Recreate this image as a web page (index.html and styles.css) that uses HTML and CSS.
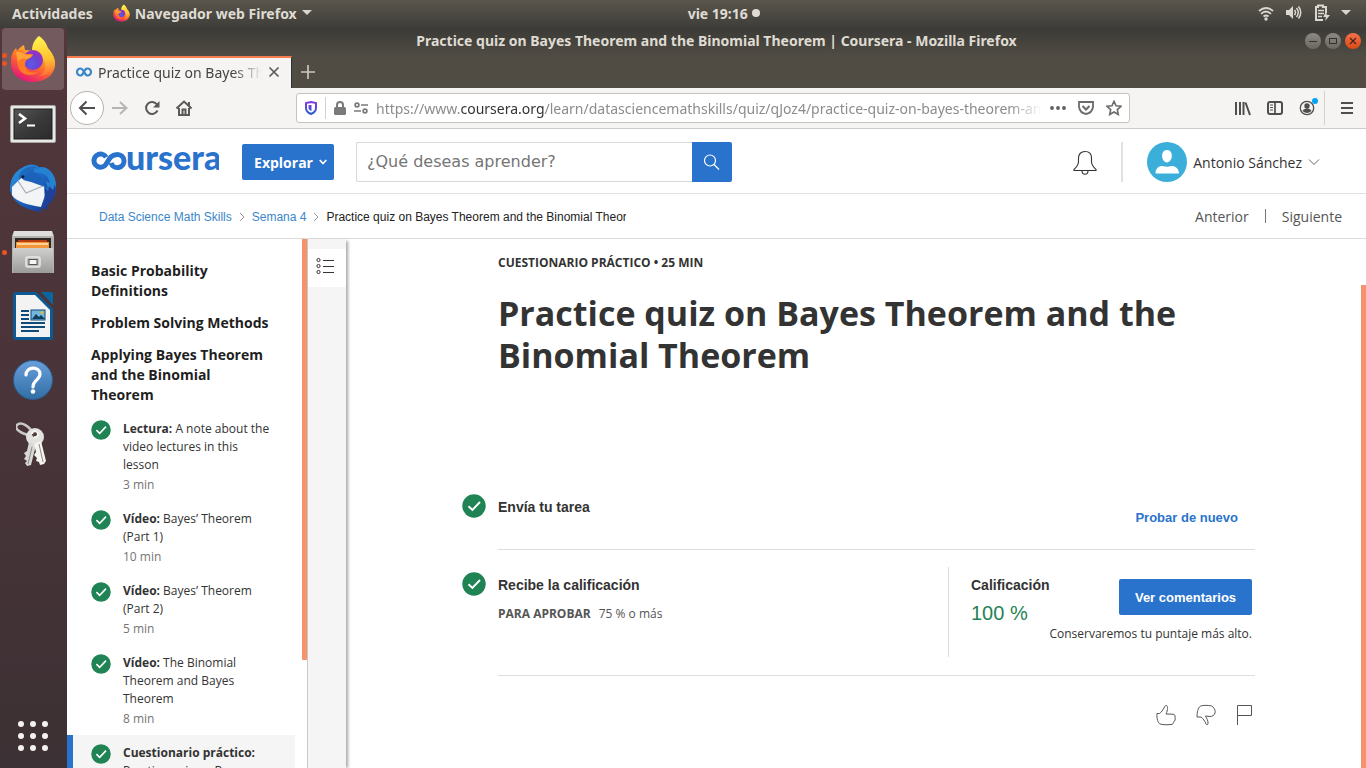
FILE: index.html
```html
<!DOCTYPE html>
<html lang="es">
<head>
<meta charset="utf-8">
<title>Practice quiz on Bayes Theorem and the Binomial Theorem | Coursera</title>
<link rel="stylesheet" href="styles.css">
</head>
<body>
<svg class="defs" aria-hidden="true">
  <defs>
    <linearGradient id="ffBody" x1="0.8" y1="0" x2="0.3" y2="1"><stop offset="0" stop-color="#fff14a"/><stop offset=".35" stop-color="#ffb22e"/><stop offset=".62" stop-color="#ff6a2a"/><stop offset="1" stop-color="#e5127d"/></linearGradient>
    <linearGradient id="ffTail" x1="0.5" y1="0" x2="0.6" y2="1"><stop offset="0" stop-color="#fff44f"/><stop offset=".6" stop-color="#ffc02f"/><stop offset="1" stop-color="#ff6a3c"/></linearGradient>
    <radialGradient id="ffGlobe" cx=".4" cy=".7" r=".7"><stop offset="0" stop-color="#5b5be8"/><stop offset=".6" stop-color="#7040cf"/><stop offset="1" stop-color="#a030c0"/></radialGradient>
    <linearGradient id="steel" x1="0" y1="0" x2="0" y2="1"><stop offset="0" stop-color="#cfcfcd"/><stop offset="1" stop-color="#9b9b99"/></linearGradient>
    <linearGradient id="term" x1="0" y1="0" x2="1" y2="1"><stop offset="0" stop-color="#565656"/><stop offset=".5" stop-color="#3a3a3a"/><stop offset="1" stop-color="#2b2b2b"/></linearGradient>
    <linearGradient id="bird" x1="0" y1="0" x2="1" y2="1"><stop offset="0" stop-color="#2f9be4"/><stop offset=".5" stop-color="#1b65c4"/><stop offset="1" stop-color="#1a2f7c"/></linearGradient>
    <linearGradient id="helpBlue" x1="0" y1="0" x2="0" y2="1"><stop offset="0" stop-color="#6a9fdb"/><stop offset="1" stop-color="#2f6ea5"/></linearGradient>
    <linearGradient id="shield" x1="0" y1="0" x2="0" y2="1"><stop offset="0" stop-color="#7c3fe0"/><stop offset="1" stop-color="#2a5bd0"/></linearGradient>
    <symbol id="firefox" viewBox="0 0 46 48">
      <path d="M29 2c4 4 6 8 7 12 3 0 8 6 9 13 1 11-8 20-22 20S0 38 1 26c0-6 2-10 5-13l1 3c2-3 5-5 7-6l1 5c5 0 9 1 12 3-1-6-1-10 2-16z" fill="url(#ffBody)"/>
      <path d="M29 1c6 4 8 9 9 12l-1-1c6 6 8 12 8 17-2 8-8 12-16 12 6-3 8-9 5-16-3-5-9-6-12-9 0-6 2-11 7-15z" fill="url(#ffTail)"/>
      <circle cx="23" cy="25" r="10" fill="url(#ffGlobe)"/>
      <path d="M4 17c4-3 9-2 12 2h6c2 0 1 3-4 5-2 1-3 3-3 5 0 6 5 10 13 8-5 5-18 4-20-6-1-5 0-8-4-14z" fill="#ff7a26"/>
      <path d="M6 17c4-1 8 1 10 3h5c1 1-1 3-4 4-3-1-8-1-9 4z" fill="#ffa43a"/>
    </symbol>
    <symbol id="check" viewBox="0 0 24 24"><circle cx="12" cy="12" r="11.700" fill="#1f8354"/><path d="M6.500 12.200l3.900 3.800 7.600-8" fill="none" stroke="#fff" stroke-width="1.900"/></symbol>
    <symbol id="chev" viewBox="0 0 6 10"><path d="M1 1l4 4-4 4" fill="none" stroke="#999" stroke-width="1"/></symbol>
  </defs>
</svg>

<header class="topbar">
  <div class="top-left">
    <button class="plain">Actividades</button>
    <button class="plain app-menu"><svg width="17" height="18"><use href="#firefox"/></svg>Navegador web Firefox<svg class="caret" width="10" height="6" viewBox="0 0 10 6"><path d="M0 0h10L5 5z" fill="#d8d5ce"/></svg></button>
  </div>
  <button class="plain clock">vie 19:16<span class="dot"></span></button>
  <div class="top-right">
    <svg width="16" height="16" viewBox="0 0 16 16" fill="none" stroke="#dbd8d1" stroke-width="1.800"><path d="M1 6q7-6 14 0M3 8.800q5-4.500 10 0M5.500 11.500q2.500-2 5 0"/><circle cx="8" cy="14" r="1.700" fill="#dbd8d1" stroke="none"/></svg>
    <svg width="18" height="16" viewBox="0 0 18 16" fill="none" stroke="#dbd8d1" stroke-width="1.500"><path d="M1 5h3l4-4v13l-4-4H1z" fill="#dbd8d1" stroke="none"/><path d="M9.500 5q2 2.500 0 5M11.500 3q3.500 4.500 0 9M13.500 1.500q4.500 6 0 12"/></svg>
    <svg width="16" height="18" viewBox="0 0 16 18" fill="none" stroke="#dbd8d1" stroke-width="2"><path d="M9 16H2V3h2V1.500h5V3h3v6"/><path d="M4 6.500h6M4 9.500h6M4 12.500h4" stroke-width="1.500"/><path d="M12 8l-3 5h3l-1 4 5-6h-3z" fill="#dbd8d1" stroke="none"/></svg>
    <svg width="10" height="6" viewBox="0 0 10 6"><path d="M0 0h10L5 5z" fill="#d8d5ce"/></svg>
  </div>
</header>

<div class="desktop">
  <nav class="dock" aria-label="Aplicaciones">
    <button class="tile active" aria-label="Firefox"><span class="runs"><i></i><i></i></span><svg width="46" height="48"><use href="#firefox"/></svg></button>
    <button class="tile" aria-label="Terminal"><svg width="46" height="38" viewBox="0 1 46 38"><rect x=".5" y="1.500" width="45" height="37" rx="1.500" fill="#e8e8e6" stroke="#a5a5a3"/><rect x="4" y="5" width="38" height="30" fill="url(#term)" stroke="#1c1c1c"/><path d="M9 10l6 4.500L9 19" fill="none" stroke="#fff" stroke-width="2.600"/><path d="M17 21.500h8" stroke="#fff" stroke-width="2"/></svg></button>
    <button class="tile" aria-label="Thunderbird"><svg width="48" height="48" viewBox="0 0 48 48"><path d="M13 4C18 0 26-1 30 3c8 1 17 9 17 21 0 7-3 13-8 17l-1 5-5-2-1 4C18 46 3 40 1 25 1 15 6 7 13 4z" fill="url(#bird)"/><path d="M3 23L12 14l23 7 1 10-4 12C20 41 7 38 3 31z" fill="#f3f4f6"/><path d="M9 17l8 12 17-7" fill="none" stroke="#a4adb8" stroke-width="1.200"/><path d="M10 16C9 7 18 1 28 3c-4 1-4 3-2 5-6 1-8 3-9 6l-4-1z" fill="#1c69bd"/><circle cx="14" cy="13" r="1.800" fill="#101d42"/><path d="M24 8c12 0 15 4 17 11l-4-2 2 8-4-3 1 17 8-8 3-10c0-9-6-17-13-18-3 0-7 2-10 5z" fill="#2582d0"/><path d="M16 12c3-5 9-5 13-2 5 3 6 8 7 13l-14-5-8-2z" fill="#1d62ba"/><path d="M36 23l3 4 1-5 4 4 2-6v8l-4 8-6 8z" fill="#203f99"/></svg></button>
    <button class="tile" aria-label="Archivos"><span class="runs"><i></i></span><svg width="42" height="44" viewBox="1 0 42 44"><path d="M3 1h38l2 5v37H1V6z" fill="#b2b2b0"/><path d="M3 1h38l1 5H2z" fill="#dededc"/><rect x="4" y="8" width="36" height="12" fill="#302722"/><path d="M7 10h29v3H7z" fill="#b93b12"/><path d="M5 12h33v7H5z" fill="#f29639"/><path d="M6 14h31" stroke="#ffe5b4" stroke-width="1.500"/><path d="M2 18h40v25H2z" fill="url(#steel)"/><rect x="15" y="27" width="14" height="10" rx="2" fill="#bdbdbb" stroke="#e9e9e7" stroke-width="1.500"/><rect x="18" y="29.500" width="8" height="5" fill="#f5f5f5" stroke="#555"/></svg></button>
    <button class="tile" aria-label="LibreOffice Writer"><svg width="40" height="48" viewBox="0 0 40 48"><path d="M3 0h20l17 17v28q0 3-3 3H3q-3 0-3-3V3q0-3 3-3z" fill="#0b5a94"/><path d="M3 3h19l15 15v27H3z" fill="#f3f3f3"/><path d="M28 0h10q2 0 2 2v11z" fill="#0b669f"/><path d="M8 19h8M8 23h8M8 27h8M8 31h24M8 35h24M8 39h18" stroke="#0d4c7a" stroke-width="2"/><rect x="18" y="18" width="14" height="10" fill="#72b5dd" stroke="#0d4c7a"/><path d="M19 27l4-5 3 3 2-2 4 4z" fill="#133e59"/><circle cx="29" cy="20.500" r="1.500" fill="#e7b933"/></svg></button>
    <button class="tile" aria-label="Ayuda"><svg width="40" height="40" viewBox="0 0 40 40"><circle cx="20" cy="20" r="19.500" fill="url(#helpBlue)" stroke="#2d5d91"/><path d="M13 15c0-9 14-9 14-1 0 6-7 6-7 13" fill="none" stroke="#fff" stroke-width="3.200" stroke-linecap="round"/><circle cx="20" cy="31.500" r="2.300" fill="#fff"/></svg></button>
    <button class="tile keys" aria-label="Contraseñas"><svg width="34" height="46" viewBox="2 0 34 46"><path d="M20 14c-4-9-13-14-17-10s6 10 17 11" fill="none" stroke="#c9c9c5" stroke-width="2.600"/><circle cx="21" cy="16" r="9" fill="#e2e2df"/><circle cx="21" cy="13" r="3" fill="#55403f"/><path d="M15 21l7 3-5 20-4 1-2-3 2-2-3-2 2-3-2-3 3-2z" fill="#d8d8d4"/><path d="M20 23l7-3 5 20-2 3-4 1-1-3-3-1 1-3-3-3 2-3z" fill="#f4f4f1"/><path d="M20 16a3 3 0 1 0-2-3" fill="none" stroke="#f5f5f0" stroke-width="2"/><path d="M18 26l-4 17M25 23l4 18" stroke="#8e8785" stroke-width="1"/></svg></button>
    <button class="tile apps" aria-label="Mostrar aplicaciones"><svg width="30" height="30" viewBox="0 0 30 30" fill="#f4f2f0"><circle cx="3" cy="3" r="3"/><circle cx="15" cy="3" r="3"/><circle cx="27" cy="3" r="3"/><circle cx="3" cy="15" r="3"/><circle cx="15" cy="15" r="3"/><circle cx="27" cy="15" r="3"/><circle cx="3" cy="27" r="3"/><circle cx="15" cy="27" r="3"/><circle cx="27" cy="27" r="3"/></svg></button>
  </nav>

  <div class="window">
    <div class="titlebar">
      <span class="win-title">Practice quiz on Bayes Theorem and the Binomial Theorem | Coursera - Mozilla Firefox</span>
      <div class="win-buttons">
        <button aria-label="Minimizar"><svg width="16" height="16" viewBox="0 0 16 16"><path d="M4 8.500h8" stroke="#33322e"/></svg></button>
        <button aria-label="Maximizar"><svg width="16" height="16" viewBox="0 0 16 16"><rect x="4.500" y="5.500" width="7" height="5" fill="none" stroke="#33322e"/></svg></button>
        <button class="close" aria-label="Cerrar"><svg width="16" height="16" viewBox="0 0 16 16"><path d="M5 5l6 6M11 5l-6 6" stroke="#40231a" stroke-width="1.200"/></svg></button>
      </div>
    </div>

    <div class="tabs">
      <div class="tab">
        <svg width="16" height="10" viewBox="0 0 16 10"><path d="M11.500 2.200C8.500.2 7.800 8.500 4.500 8.500a3.300 3.300 0 1 1 0-7c3.300 0 4 7 7 7a3.300 3.300 0 1 0 0-7c-1 0-1.700.3-2.300.9" fill="none" stroke="#3a86c8" stroke-width="2.200"/></svg>
        <span class="tab-title">Practice quiz on Bayes Theorem</span>
        <button class="plain" aria-label="Cerrar pestaña"><svg width="12" height="12" viewBox="0 0 12 12"><path d="M1.500 1.500l9 9M10.500 1.500l-9 9" stroke="#5c5b58" stroke-width="1.700"/></svg></button>
      </div>
      <button class="plain new-tab" aria-label="Nueva pestaña"><svg width="14" height="14" viewBox="0 0 14 14"><path d="M7 0v14M0 7h14" stroke="#c9c6bf" stroke-width="1.700"/></svg></button>
    </div>

    <div class="toolbar">
      <button class="back" aria-label="Atrás"><svg width="18" height="16" viewBox="0 0 18 16"><path d="M17 8H2M8.500 1.500L2 8l6.500 6.500" fill="none" stroke="#4f4e4c" stroke-width="2"/></svg></button>
      <button class="plain nav" aria-label="Adelante"><svg width="16" height="16" viewBox="0 0 16 16"><path d="M0 8h14M8 2l6.500 6L8 14" fill="none" stroke="#b6b5b3" stroke-width="2"/></svg></button>
      <button class="plain nav" aria-label="Recargar"><svg width="16" height="16" viewBox="0 0 16 16"><path d="M13.500 10.500A6 6 0 1 1 13 4.500" fill="none" stroke="#5a5957" stroke-width="2"/><path d="M15.500 1v6.500H9z" fill="#5a5957"/></svg></button>
      <button class="plain nav" aria-label="Inicio"><svg width="16" height="16" viewBox="0 0 16 16"><path d="M.5 8.500L8 1.500l7.500 7M3 8v7h10V8" fill="none" stroke="#5a5957" stroke-width="2"/><path d="M6.500 15V9.500h3V15M13 2v4" fill="none" stroke="#5a5957" stroke-width="2"/></svg></button>
      <div class="urlbar">
        <svg width="12" height="14" viewBox="0 0 12 14"><path d="M6 1l5 1v5q0 4-5 6-5-2-5-6V2z" fill="#fff" stroke="url(#shield)" stroke-width="2"/><path d="M6.500 4v6q-3-1-3-3.500V4z" fill="url(#shield)"/></svg>
        <i class="url-sep"></i>
        <svg class="lock" width="12" height="14" viewBox="0 0 12 14"><path d="M3 7V4a3 3 0 0 1 6 0v3" fill="none" stroke="#7b7a79" stroke-width="2"/><rect y="6" width="12" height="8" rx="1.500" fill="#7b7a79"/></svg>
        <svg class="perm" width="14" height="12" viewBox="0 0 14 12" fill="none" stroke="#7b7a79" stroke-width="1.700"><circle cx="3" cy="3" r="1.900"/><path d="M7 3h7M0 9h7"/><circle cx="11" cy="9" r="1.900"/></svg>
        <span class="url">https://www.<b>coursera.org</b>/learn/datasciencemathskills/quiz/qJoz4/practice-quiz-on-bayes-theorem-and</span>
        <svg width="16" height="4" viewBox="0 0 16 4" fill="#5f5e5c"><circle cx="2" cy="2" r="1.900"/><circle cx="8" cy="2" r="1.900"/><circle cx="14" cy="2" r="1.900"/></svg>
        <svg width="16" height="14" viewBox="0 0 16 14" fill="none" stroke="#6c6b69" stroke-width="1.800"><path d="M1 1h14v5q-1 6-7 7-6-1-7-7z"/><path d="M4.500 5L8 8.500 11.500 5" stroke-width="2"/></svg>
        <svg width="16" height="16" viewBox="0 0 16 16" fill="none" stroke="#6c6b69" stroke-width="1.600"><path d="M8 1.300l2 4.500 5 .5-3.700 3.300 1 4.900L8 12l-4.300 2.500 1-4.900L1 6.300l5-.5z"/></svg>
      </div>
      <div class="tools">
        <svg width="16" height="16" viewBox="0 0 16 16" stroke="#4f4e4c" stroke-width="2"><path d="M1 2v13M5 2v13M8.500 2v13M10.500 2.500L15 15" /></svg>
        <svg width="16" height="14" viewBox="0 0 16 14" fill="none" stroke="#4f4e4c"><rect x="1" y="1" width="14" height="12" rx="2" stroke-width="2"/><path d="M8 1v12" stroke-width="1.700"/><path d="M3 4h3M3 6.500h3M3 9h3"/></svg>
        <svg width="20" height="20" viewBox="0 0 20 20"><circle cx="8" cy="10" r="6.700" fill="none" stroke="#4f4e4c" stroke-width="1.300"/><circle cx="8" cy="8" r="2.700" fill="#4f4e4c"/><path d="M3.500 13q1-2.500 4.500-2.500t4.500 2.500q-4.500 4-9 0z" fill="#4f4e4c"/><circle cx="16" cy="3" r="3" fill="#00a5f5"/></svg>
        <i class="tool-sep"></i>
        <svg width="12" height="12" viewBox="0 0 12 12" stroke="#4f4e4c" stroke-width="2"><path d="M0 1h12M0 6h12M0 11h12"/></svg>
      </div>
    </div>

    <div class="page">
      <div class="site-header">
        <a class="logo" href="#" aria-label="Coursera"><svg width="128" height="26" viewBox="0 0 128 26"><path d="M15.200 8.200A6.600 6.600 0 1 0 14 16.500C17.500 13 18.500 5.400 26.500 5.400a6.600 6.600 0 1 1-6.400 8.600" fill="none" stroke="#2a73cc" stroke-width="5"/><text class="logo-text" x="35" y="21">ursera</text></svg></a>
        <button class="explore">Explorar<svg width="8" height="6" viewBox="0 0 8 6"><path d="M.7 1l3.300 3.500L7.300 1" fill="none" stroke="#fff" stroke-width="1.700"/></svg></button>
        <form class="search">
          <input type="text" placeholder="¿Qué deseas aprender?" aria-label="¿Qué deseas aprender?">
          <button type="button" aria-label="Buscar"><svg width="18" height="18" viewBox="0 0 18 18" fill="none" stroke="#fff" stroke-width="1.200"><circle cx="7" cy="7.500" r="5.500"/><path d="M11 11.500L16 16.500"/></svg></button>
        </form>
        <div class="account">
          <button class="plain" aria-label="Notificaciones"><svg width="24" height="26" viewBox="0 -1 24 26" fill="none" stroke="#333" stroke-width="1.100"><path d="M1 20.500v-1c2-2 4.500-4 4.500-8V8C5.500 4 8 1.500 12 1.500S18.500 4 18.500 8v3.500c0 4 2.500 6 4.500 8v1z"/><path d="M9 20.500c0 5 6 5 6 0"/></svg></button>
          <i class="head-sep"></i>
          <button class="plain user"><svg width="40" height="40" viewBox="0 0 40 40"><circle cx="20" cy="20" r="20" fill="#3bafda"/><path d="M20 8c7 0 6 12 0 12.500C14 20 13 8 20 8zM8.500 31.500c0-5 3-7.500 7-7.500q4.500 1.500 9 0c4 0 7.500 2.500 7.500 7.500z" fill="#fff"/></svg>Antonio Sánchez<svg width="12" height="8" viewBox="0 0 12 8"><path d="M1 1.500l5 5 5-5" fill="none" stroke="#666"/></svg></button>
        </div>
      </div>

      <div class="crumb-bar">
        <nav class="crumbs" aria-label="Ruta">
          <a href="#">Data Science Math Skills</a><svg width="6" height="10"><use href="#chev"/></svg><a href="#">Semana 4</a><svg width="6" height="10"><use href="#chev"/></svg><span class="here">Practice quiz on Bayes Theorem and the Binomial Theorem</span>
        </nav>
        <div class="pager"><a href="#">Anterior</a><i></i><a href="#">Siguiente</a></div>
      </div>

      <div class="content">
        <aside class="sidebar">
          <div class="lessons">
            <h2>Basic Probability Definitions</h2>
            <h2>Problem Solving Methods</h2>
            <h2>Applying Bayes Theorem and the Binomial Theorem</h2>
            <ul>
              <li><svg width="20" height="20"><use href="#check"/></svg><div><p><b>Lectura:</b> A note about the video lectures in this lesson</p><small>3 min</small></div></li>
              <li><svg width="20" height="20"><use href="#check"/></svg><div><p><b>Vídeo:</b> Bayes’ Theorem (Part 1)</p><small>10 min</small></div></li>
              <li><svg width="20" height="20"><use href="#check"/></svg><div><p><b>Vídeo:</b> Bayes’ Theorem (Part 2)</p><small>5 min</small></div></li>
              <li><svg width="20" height="20"><use href="#check"/></svg><div><p><b>Vídeo:</b> The Binomial Theorem and Bayes Theorem</p><small>8 min</small></div></li>
              <li class="current"><svg width="20" height="20"><use href="#check"/></svg><div><p><b>Cuestionario práctico:</b> Practice quiz on Bayes Theorem</p></div></li>
            </ul>
          </div>
          <div class="side-scroll"><i></i></div>
        </aside>
        <div class="rail"><button aria-label="Lista de contenidos"><svg width="18" height="18" viewBox="0 0 18 18" fill="none" stroke="#333"><circle cx="2.500" cy="3" r="1.600"/><circle cx="2.500" cy="9" r="1.600"/><circle cx="2.500" cy="15" r="1.600"/><path d="M7 3.500h11M7 9.500h11M7 15.500h11"/></svg></button></div>

        <main class="quiz">
          <div class="quiz-head">
            <p class="meta">Cuestionario práctico • 25 min</p>
            <h1>Practice quiz on Bayes Theorem and the Binomial Theorem</h1>
          </div>
          <section class="step">
            <svg width="24" height="24"><use href="#check"/></svg>
            <div class="step-body submit">
              <h3>Envía tu tarea</h3>
              <button class="plain retry">Probar de nuevo</button>
            </div>
          </section>
          <section class="step">
            <svg class="grade-check" width="24" height="24"><use href="#check"/></svg>
            <div class="step-body grade">
              <div class="grade-left">
                <h3>Recibe la calificación</h3>
                <p class="pass"><b>Para aprobar</b><span>75 % o más</span></p>
              </div>
              <div class="grade-right">
                <div class="score"><h3>Calificación</h3><p>100 %</p></div>
                <div class="feedback"><button>Ver comentarios</button><p>Conservaremos tu puntaje más alto.</p></div>
              </div>
            </div>
          </section>
          <div class="reactions">
            <button class="plain" aria-label="Me gusta"><svg width="20" height="22" viewBox="0 0 20 22" fill="none" stroke="#55565a"><path d="M10 10c2-4 2-8 .5-8.500-1-.3-1.500.5-2 1.500C7 6 5 8.500 3.500 9.500H1c-.5 5 1 9.500 3 10.500 4 1 8 1 12 .3 1-.3 1.500-1 1.500-2 1.500-1.500 2-3 1.500-4.500.5-2.500-.5-3.500-2-3.600z"/></svg></button>
            <button class="plain" aria-label="No me gusta"><svg width="20" height="22" viewBox="0 0 20 22" fill="none" stroke="#55565a"><path d="M9.500 12c1 2 3 5 2.500 8-.5 1-1.500.8-2 0C9 17 7 14.500 5 13H1c0-5 1-9 3-10.500C5 1 15 1 16.500 2.500 19 5 19.500 7 19 9c-.5 2.500-3 3.500-5 3.500z"/></svg></button>
            <button class="plain" aria-label="Informar"><svg width="16" height="22" viewBox="0 0 16 22" fill="none" stroke="#55565a"><path d="M1.500 21V1.500h14v10h-14"/></svg></button>
          </div>
        </main>
        <div class="page-scroll"><i></i></div>
      </div>
    </div>
  </div>
</div>
</body>
</html>
```
FILE: styles.css
```css
* { box-sizing: border-box; }
body {
  margin: 0;
  height: 100vh;
  overflow: hidden;
  display: flex;
  flex-direction: column;
  font-family: "Open Sans", "Noto Sans", sans-serif;
  font-size: 14px;
  color: #333;
  background: #fff;
}
h1, h2, h3, p, ul { margin: 0; padding: 0; }
svg { flex: none; display: block; }
a { color: inherit; text-decoration: none; }
button { font: inherit; color: inherit; border: 0; padding: 0; cursor: pointer; }
.plain { background: none; }
.defs { position: absolute; width: 0; height: 0; }

/* System bar */
.topbar {
  flex: none;
  height: 28px;
  display: grid;
  grid-template-columns: 8fr auto 7fr;
  align-items: center;
  padding: 0 15px 2px 12px;
  background: linear-gradient(#5a564d, #3e3d39);
  color: #dfdbd2;
  font-family: "Noto Sans", sans-serif;
  font-size: 14px;
  font-weight: 700;
}
.top-left, .app-menu, .clock, .top-right { display: flex; align-items: center; }
.top-left { gap: 20px; }
.app-menu { gap: 5px; }
.clock { gap: 4px; }
.dot { width: 8px; height: 8px; border-radius: 50%; background: #dfdbd2; }
.top-right { justify-content: flex-end; gap: 11px; }

/* Dock */
.desktop { flex: 1; min-height: 0; display: flex; }
.dock {
  flex: none;
  width: 67px;
  padding: 0 3px 1px 2px;
  display: flex;
  flex-direction: column;
  gap: 2px;
  background: linear-gradient(#52373b, #493439 50%, #3c3134);
}
.tile {
  flex: none;
  height: 62px;
  display: flex;
  align-items: center;
  justify-content: center;
  position: relative;
  padding-top: 2px;
  background: none;
  border-radius: 4px;
}
.tile.active { background: #725a5f; padding: 0; }
.tile.apps { margin-top: auto; padding: 0; }
.runs { position: absolute; left: 0; display: flex; flex-direction: column; gap: 3px; }
.runs i { width: 5px; height: 5px; border-radius: 50%; background: #e95420; }

/* Window frame */
.window { flex: 1; min-width: 0; display: flex; flex-direction: column; }
.titlebar {
  flex: none;
  height: 28px;
  display: grid;
  grid-template-columns: 1fr auto 1fr;
  align-items: center;
  padding: 0 5px 3px;
  background: linear-gradient(#3b3a36, #504c44);
  color: #dfdbd2;
  font-family: "Noto Sans", sans-serif;
  font-size: 14px;
  font-weight: 700;
}
.win-title { grid-column: 2; white-space: nowrap; }
.win-buttons { display: flex; justify-content: flex-end; gap: 4px; }
.win-buttons button { width: 16px; height: 16px; border-radius: 50%; background: linear-gradient(#8b8981, #6a6861); }
.win-buttons .close { background: linear-gradient(#f4704a, #dd4814); }
.tabs { flex: none; height: 32px; display: flex; background: #504c44; }
.tab {
  width: 225px;
  display: flex;
  align-items: center;
  gap: 6px;
  padding: 0 11px 2px 9px;
  background: #f5f4f2;
  border-top: 2px solid #f57c4f;
  border-right: 1px solid #33312c;
}
.tab-title {
  flex: 1;
  overflow: hidden;
  white-space: nowrap;
  color: #444;
  font-family: "Noto Sans", sans-serif;
  mask-image: linear-gradient(to right, #000 82%, transparent);
}
.new-tab { width: 32px; display: flex; align-items: center; justify-content: center; }
.toolbar {
  flex: none;
  height: 41px;
  display: flex;
  align-items: center;
  padding: 0 13px 0 3px;
  background: #f5f4f2;
  border-bottom: 1px solid #cfccc8;
}
.back {
  flex: none;
  width: 34px;
  height: 34px;
  display: flex;
  align-items: center;
  justify-content: center;
  border: 1px solid #b5b3b0;
  border-radius: 50%;
  background: #fff;
}
.nav { flex: none; width: 32px; display: flex; justify-content: center; }
.urlbar {
  flex: 1;
  min-width: 0;
  margin-left: 96px;
  height: 30px;
  display: flex;
  align-items: center;
  gap: 12px;
  padding: 0 7px 0 8px;
  border: 1px solid #c6c3bf;
  border-radius: 3px;
  background: #fff;
}
.url-sep { width: 1px; height: 22px; background: #d0d0d0; margin-left: -4px; }
.lock { margin-left: -4px; }
.perm { margin-left: -4px; }
.url {
  flex: 1;
  min-width: 0;
  margin: 0 -4px;
  overflow: hidden;
  white-space: nowrap;
  color: #8d8c8b;
  font-family: "Noto Sans", sans-serif;
  mask-image: linear-gradient(to right, #000 95%, transparent);
}
.url b { font-weight: 400; color: #333; }
.tools { display: flex; align-items: center; gap: 16px; margin-left: 105px; }
.tool-sep { width: 1px; height: 34px; background: #d3d1ce; margin-left: -11px; }

/* Site header */
.page { flex: 1; min-height: 0; display: flex; flex-direction: column; }
.site-header {
  flex: none;
  height: 65px;
  display: flex;
  align-items: center;
  padding: 2px 46px 0 24px;
  border-bottom: 1px solid #e1e1e1;
}
.logo-text { font-family: Lato, sans-serif; font-weight: 900; font-size: 34px; fill: #2a73cc; }
.explore {
  width: 92px;
  height: 36px;
  margin: 0 22px 0 23px;
  padding-left: 5px;
  display: flex;
  align-items: center;
  justify-content: center;
  gap: 6px;
  border-radius: 2px;
  background: #2a73cc;
  color: #fff;
  font-weight: 700;
}
.search { display: flex; width: 376px; height: 40px; }
.search input {
  flex: 1;
  min-width: 0;
  padding: 0 10px 2px;
  border: 1px solid #d9d9d9;
  border-right: 0;
  border-radius: 2px 0 0 2px;
  font: 16px "DejaVu Sans", sans-serif;
}
.search input::placeholder { color: #757575; }
.search button {
  width: 40px;
  display: flex;
  align-items: center;
  justify-content: center;
  border-radius: 0 2px 2px 0;
  background: #2a73cc;
}
.account { margin-left: auto; display: flex; align-items: center; gap: 24px; }
.head-sep { width: 2px; height: 40px; background: #e1e1e1; }
.user { display: flex; align-items: center; gap: 6px; }

/* Breadcrumbs */
.crumb-bar {
  flex: none;
  height: 45px;
  display: flex;
  align-items: center;
  justify-content: space-between;
  padding: 0 24px 0 32px;
  border-bottom: 1px solid #dcdcdc;
}
.crumbs { display: flex; align-items: center; gap: 7px; padding-top: 2px; font: 12px "Liberation Sans", Arial, sans-serif; }
.crumbs a { color: #3a86cb; }
.here { width: 300px; overflow: hidden; white-space: nowrap; color: #222; }
.pager { display: flex; align-items: center; gap: 16px; color: #555; }
.pager i { width: 1px; height: 14px; background: #777; }

/* Course sidebar */
.content { flex: 1; min-height: 0; display: flex; }
.sidebar { flex: none; width: 241px; display: flex; overflow: hidden; border-right: 1px solid #c8c8c8; }
.lessons { width: 228px; padding-top: 22px; }
.lessons h2 { margin-bottom: 12px; padding: 0 24px; font-size: 14px; line-height: 20px; font-weight: 700; color: #1f1f1f; }
.lessons ul { list-style: none; margin-top: -6px; }
.lessons li {
  display: flex;
  gap: 12px;
  padding: 9px 24px 7px 18px;
  border-left: 6px solid transparent;
  font-size: 12px;
  line-height: 18px;
}
.lessons small { display: block; margin-top: 2px; font-size: 12px; color: #757575; }
.current { background: #f5f5f5; }
.lessons .current { border-left-color: #2a73cc; }
.side-scroll { width: 5px; margin-left: auto; }
.side-scroll i { display: block; height: 421px; border-radius: 0 0 1px 1px; background: #f5936e; }
.rail { flex: none; width: 38px; padding-top: 10px; background: #f5f5f5; box-shadow: 3px 1px 3px -1px rgba(0, 0, 0, .35); }
.rail button { width: 38px; height: 38px; padding: 0 4px 4px 0; display: flex; align-items: center; justify-content: center; background: #fff; }

/* Quiz */
.quiz { flex: 1; min-width: 0; padding: 15px 106px 0 116px; }
.quiz-head { padding-left: 36px; height: 240px; }
.meta { font-size: 12px; line-height: 18px; font-weight: 700; text-transform: uppercase; }
h1 { margin-top: 20px; font-size: 34px; line-height: 42px; font-weight: 700; }
.step { display: flex; gap: 12px; }
.step-body { flex: 1; min-width: 0; border-bottom: 1px solid #dedede; }
h3 { font: 700 14px/20px "Liberation Sans", Arial, sans-serif; }
.submit { height: 56px; display: flex; justify-content: space-between; align-items: flex-start; padding: 3px 17px 0 0; }
.retry { margin-top: 11px; font: 700 13px/20px "Liberation Sans", Arial, sans-serif; color: #2a73cc; }
.grade-check { margin-top: 22px; }
.grade { display: flex; padding: 17px 0 18px; }
.grade-left { flex: 1; padding-top: 8px; }
.pass { display: flex; gap: 8px; margin-top: 10px; font-size: 12px; line-height: 18px; color: #555; }
.pass b { text-transform: uppercase; }
.grade-right {
  width: 307px;
  height: 90px;
  display: flex;
  justify-content: space-between;
  padding: 8px 3px 0 22px;
  border-left: 1px solid #dedede;
}
.score { width: 78px; white-space: nowrap; }
.score p { margin-top: 6px; font: 20px/24px "Liberation Sans", Arial, sans-serif; color: #1f8354; }
.feedback { width: 203px; display: flex; flex-direction: column; align-items: flex-end; padding-top: 4px; }
.feedback button {
  width: 133px;
  height: 36px;
  border-radius: 2px;
  background: #2a73cc;
  color: #fff;
  font: 700 13px "Liberation Sans", Arial, sans-serif;
}
.feedback p { margin-top: 10px; font-size: 12px; line-height: 18px; white-space: nowrap; }
.reactions { display: flex; justify-content: flex-end; align-items: center; gap: 20px; padding: 28px 3px 0 0; }
.page-scroll { flex: none; width: 5px; padding-top: 46px; display: flex; }
.page-scroll i { width: 5px; background: #f5936e; }
```
